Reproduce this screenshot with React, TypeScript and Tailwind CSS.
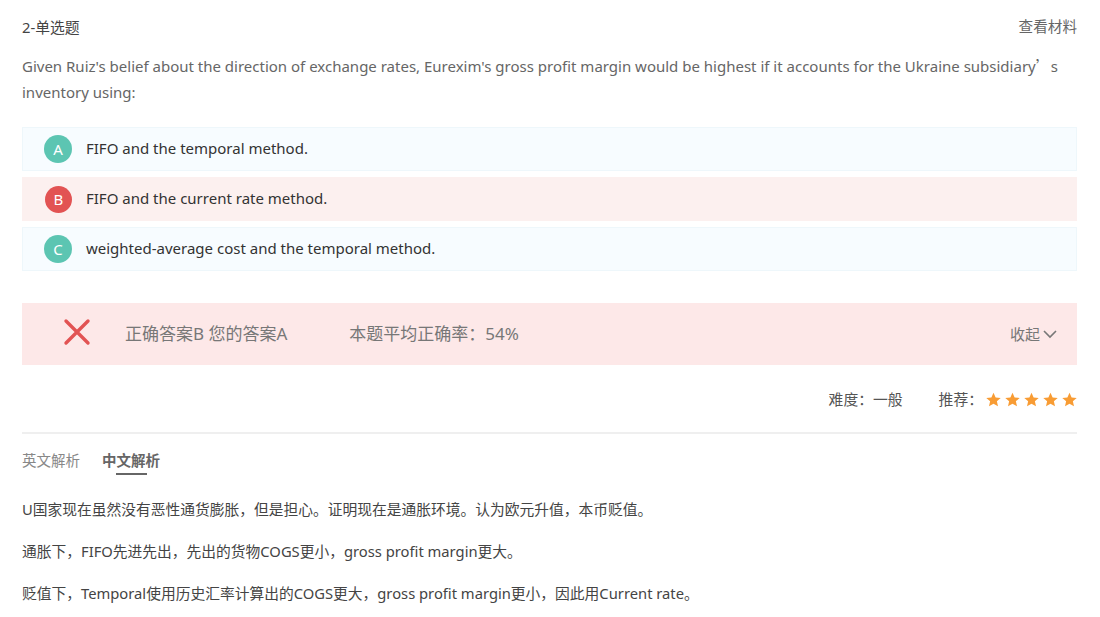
const font = { fontFamily: '"Noto Sans", "Noto Sans CJK SC", sans-serif' };
const cjk = { fontFamily: '"Noto Sans CJK SC", sans-serif' };

function Opt({ l, t, wrong }: { l: string; t: string; wrong?: boolean }) {
  return (
    <div className={wrong ? "h-[44px] flex items-center bg-[#fcf0ef] pl-[23px]" : "h-[44px] flex items-center bg-[#f7fcff] border border-[#eef7fb] pl-[21px]"}>
      <div className={wrong ? "w-[27px] h-[27px] rounded-full bg-[#e25353] text-white flex items-center justify-center text-[15px]" : "w-[28px] h-[28px] rounded-full bg-[#5cc5b2] text-white flex items-center justify-center text-[15px]"}>{l}</div>
      <div className="ml-[14px] pb-[2px] text-[15px] text-[#333]">{t}</div>
    </div>
  );
}

function Star() {
  return (
    <svg width="15" height="15" viewBox="0 0 24 24" className="fill-[#f89c34]">
      <path d="M12 1l3.4 7.6 8.1.8-6.1 5.4 1.8 8.1L12 18.7 4.8 22.9l1.8-8.1L.5 9.4l8.1-.8z" />
    </svg>
  );
}

export default function App() {
  return (
    <div lang="zh-CN" style={font} className="w-[1100px] h-[617px] bg-white pl-[22px] pr-[23px] pt-[17px] overflow-hidden">
      <div className="flex justify-between items-center h-[20px] text-[14.8px] text-[#444]">
        <span>2-单选题</span>
        <span className="text-[14.6px] text-[#666]">查看材料</span>
      </div>
      <div className="mt-[16px] text-[15px] leading-[26px] text-[#666]">
        Given Ruiz's belief about the direction of exchange rates, Eurexim's gross profit margin would be highest if it accounts for the Ukraine subsidiary<span style={cjk}>’</span>s
        <br />
        inventory using:
      </div>
      <div className="mt-[22px] flex flex-col gap-[6px]">
        <Opt l="A" t="FIFO and the temporal method." />
        <Opt l="B" t="FIFO and the current rate method." wrong />
        <Opt l="C" t="weighted-average cost and the temporal method." />
      </div>
      <div className="mt-[32px] h-[62px] bg-[#fde8e8] flex items-center pl-[41px] pr-[20px] text-[#777]">
        <svg width="28" height="28" viewBox="0 0 28 28" className="stroke-[#e25353] mb-[5px]" fill="none" strokeWidth="3.4" strokeLinecap="round">
          <path d="M3 3 L25 25 M25 3 L3 25" />
        </svg>
        <span className="ml-[34px] text-[17px]">正确答案B 您的答案A</span>
        <span className="ml-[62px] text-[17px]">本题平均正确率：54%</span>
        <span className="ml-auto text-[15px] flex items-center gap-[3px]">
          收起
          <svg width="14" height="9" viewBox="0 0 14 9" fill="none" className="stroke-[#777]" strokeWidth="1.6"><path d="M1 1l6 6 6-6" /></svg>
        </span>
      </div>
      <div className="h-[69px] border-b-2 border-[#efefef] flex items-center justify-end text-[14.8px] text-[#555] pt-[2px]">
        <span>难度：一般</span>
        <span className="ml-[36px]">推荐：</span>
        <div className="ml-[3px] flex gap-[4px]">
          <Star /><Star /><Star /><Star /><Star />
        </div>
      </div>
      <div className="mt-[16px] flex text-[14.5px] h-[26px]">
        <span className="text-[#888]">英文解析</span>
        <div className="ml-[22px] flex flex-col items-center">
          <span className="font-bold text-[#666]">中文解析</span>
          <div className="w-[31px] h-[2px] bg-[#666] mt-[1px]" />
        </div>
      </div>
      <div className="mt-[21px] flex flex-col gap-[18px] text-[14.75px] leading-[24px] text-[#444]">
        <div>U国家现在虽然没有恶性通货膨胀，但是担心。证明现在是通胀环境。认为欧元升值，本币贬值。</div>
        <div>通胀下，FIFO先进先出，先出的货物COGS更小，gross profit margin更大。</div>
        <div>贬值下，Temporal使用历史汇率计算出的COGS更大，gross profit margin更小，因此用Current rate。</div>
      </div>
    </div>
  );
}
